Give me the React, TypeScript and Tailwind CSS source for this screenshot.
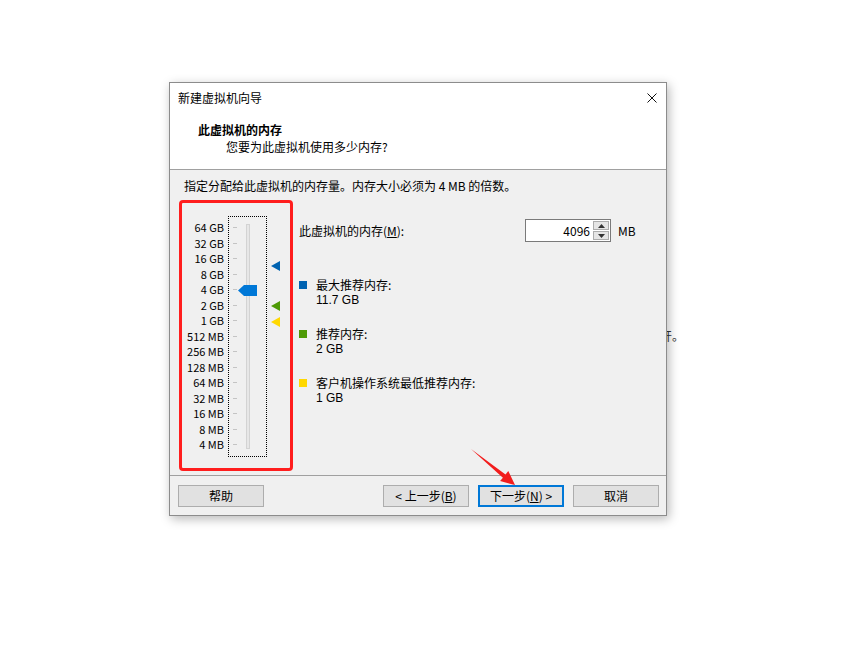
import React from 'react';

const sizes = ['64 GB', '32 GB', '16 GB', '8 GB', '4 GB', '2 GB', '1 GB', '512 MB', '256 MB', '128 MB', '64 MB', '32 MB', '16 MB', '8 MB', '4 MB'];

const hints = [
  { color: 'bg-[#0063b1]', title: '最大推荐内存:', value: '11.7 GB' },
  { color: 'bg-[#4e9a06]', title: '推荐内存:', value: '2 GB' },
  { color: 'bg-[#ffd800]', title: '客户机操作系统最低推荐内存:', value: '1 GB' },
];

const Marker: React.FC<{ fill: string; top: string }> = ({ fill, top }) => (
  <svg className={`absolute left-0 ${top}`} width="9" height="10" viewBox="0 0 9 10">
    <polygon points="0,5 9,0 9,10" fill={fill} />
  </svg>
);

const Btn: React.FC<{ children: React.ReactNode; primary?: boolean }> = ({ children, primary }) => (
  <button
    className={`w-[86px] h-[22px] flex items-center justify-center text-[12px] leading-none bg-[#e1e1e1] ${
      primary ? 'border-2 border-[#0078d7]' : 'border border-[#adadad]'
    }`}
  >
    {children}
  </button>
);

export default function App() {
  return (
    <div className="relative w-[866px] h-[667px] bg-white pt-[82px] pl-[169px] text-black font-['Noto_Sans_CJK_SC',sans-serif]">
      {/* text of the page behind the dialog */}
      <span className="absolute left-[660px] top-[327px] text-[12px] text-[#333]">开。</span>

      <div className="relative w-[498px] border border-[#8c8c8c] bg-white shadow-[2px_3px_10px_rgba(0,0,0,0.28)] flex flex-col">
        {/* title bar */}
        <div className="h-[30px] flex items-center pl-[8px] pr-[9px]">
          <span className="text-[12px]">新建虚拟机向导</span>
          <svg className="ml-auto" width="10" height="10" viewBox="0 0 10 10">
            <path d="M0.5 0.5 L9.5 9.5 M9.5 0.5 L0.5 9.5" stroke="#111" strokeWidth="1" />
          </svg>
        </div>

        {/* header */}
        <div className="h-[57px] border-b border-[#a0a0a0] pt-[8px]">
          <div className="pl-[28px] text-[12px] leading-[18px] font-bold">此虚拟机的内存</div>
          <div className="pl-[56px] text-[12px] leading-[16px]">您要为此虚拟机使用多少内存?</div>
        </div>

        {/* body */}
        <div className="h-[305px] bg-[#f0f0f0] pt-[7px]">
          <div className="pl-[14px] text-[12px] leading-[18px]">指定分配给此虚拟机的内存量。内存大小必须为 4 MB 的倍数。</div>

          <div className="flex items-start mt-[5px]">
            {/* slider */}
            <div className="ml-[9px] w-[114px] h-[271px] border-[3px] border-[#ff1e1e] rounded-[4px] flex items-start pt-[13px]">
              <div className="w-[42px] mt-[4px] flex flex-col items-end">
                {sizes.map(s => (
                  <div key={s} className="h-[15.5px] flex items-center text-[11px] leading-none whitespace-nowrap">{s}</div>
                ))}
              </div>
              <div className="ml-[4px] w-[39px] h-[241px] border border-dotted border-black pt-[3px] pl-[4px] flex">
                <div className="flex flex-col">
                  {sizes.map(s => (
                    <div key={s} className="h-[15.5px] flex items-center">
                      <div className="w-[4px] h-px bg-[#c4c4c4]" />
                    </div>
                  ))}
                </div>
                <div className="relative ml-[9px] w-[4px]">
                  <div className="mt-[4px] w-[4px] h-[225px] bg-[#e7e7e7] border border-[#d3d3d3]" />
                  <svg className="absolute left-[-8px] top-[65px]" width="19" height="11" viewBox="0 0 19 11">
                    <polygon points="0,5.5 6,0 19,0 19,11 6,11" fill="#0078d7" />
                  </svg>
                </div>
              </div>
              <div className="relative ml-[4px] w-[9px] h-[241px]">
                <Marker fill="#0063b1" top="top-[45px]" />
                <Marker fill="#4e9a06" top="top-[85px]" />
                <Marker fill="#ffd800" top="top-[101px]" />
              </div>
            </div>

            {/* right side */}
            <div className="ml-[6px] flex flex-col">
              <div className="mt-[19px] flex items-center">
                <span className="w-[226px] text-[12px]">
                  此虚拟机的内存(<span className="underline">M</span>):
                </span>
                <div className="flex h-[23px] border border-[#7a7a7a] bg-white">
                  <div className="w-[66px] flex items-center justify-end pr-[2px] text-[12px]">4096</div>
                  <div className="w-[18px] flex flex-col gap-px p-px bg-white">
                    <div className="flex-1 bg-[#e5e5e5] border border-[#acacac] flex items-center justify-center">
                      <svg width="7" height="4" viewBox="0 0 7 4"><polygon points="3.5,0 7,4 0,4" fill="#333" /></svg>
                    </div>
                    <div className="flex-1 bg-[#e5e5e5] border border-[#acacac] flex items-center justify-center">
                      <svg width="7" height="4" viewBox="0 0 7 4"><polygon points="0,0 7,0 3.5,4" fill="#333" /></svg>
                    </div>
                  </div>
                </div>
                <span className="ml-[7px] text-[12px]">MB</span>
              </div>

              <div className="mt-[35px] flex flex-col gap-[18px]">
                {hints.map(h => (
                  <div key={h.title} className="flex items-start">
                    <div className={`w-[8px] h-[8px] mt-[4px] ${h.color}`} />
                    <div className="ml-[9px] text-[12px]">
                      <div className="leading-[15px]">{h.title}</div>
                      <div className="leading-[16px] font-['Liberation_Sans',sans-serif]">{h.value}</div>
                    </div>
                  </div>
                ))}
              </div>
            </div>
          </div>
        </div>

        {/* footer */}
        <div className="h-[40px] bg-[#f0f0f0] border-t border-[#a0a0a0] pt-[9px] pl-[8px] pr-[7px] flex items-start">
          <Btn>帮助</Btn>
          <div className="ml-auto flex gap-[9px]">
            <Btn>&lt; 上一步(<span className="underline">B</span>)</Btn>
            <Btn primary>下一步(<span className="underline">N</span>) &gt;</Btn>
            <Btn>取消</Btn>
          </div>
        </div>
      </div>

      {/* annotation arrow */}
      <svg className="absolute left-[465px] top-[444px]" width="60" height="48" viewBox="465 444 60 48">
        <polygon points="471,449 505.5,474.6 508.3,471.1 515,485 500.1,481.1 502.9,477.7" fill="#f21d1d" />
      </svg>
    </div>
  );
}
